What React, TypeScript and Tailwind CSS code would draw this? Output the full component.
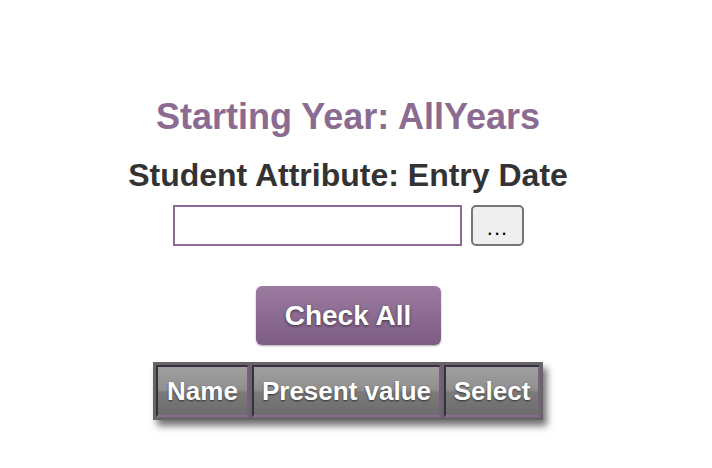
import React from "react";

export default function App() {
  const cell =
    "px-[8px] h-[52px] text-white font-bold text-[26px] border-2 border-t-[#3a2f3d] border-l-[#3a2f3d] border-r-[#7a5f80] border-b-[#8c6b92] bg-[linear-gradient(to_bottom,#a0a0a0_0%,#8f8f8f_48%,#7b7b7b_52%,#6c6c6c_100%)] [text-shadow:0_1px_2px_rgba(0,0,0,0.6)] whitespace-nowrap";
  return (
    <div className="w-[712px] h-[468px] bg-white">
      <div
        className="w-[696px] flex flex-col items-center"
        style={{ fontFamily: '"Liberation Sans", Arial, sans-serif' }}
      >
        <div className="mt-[95px] text-[36px] font-bold text-[#8b6b91] leading-[44px]">
          Starting Year: AllYears
        </div>
        <div className="mt-[18px] text-[32px] font-bold text-[#333] leading-[36px]">
          Student Attribute: Entry Date
        </div>
        <div className="mt-[12px] flex items-center gap-[9px]">
          <input
            type="text"
            className="w-[289px] h-[41px] border-2 border-[#8b6b91] outline-none bg-white"
          />
          <button className="w-[53px] h-[41px] rounded-[5px] border-2 border-[#767676] bg-[#efefef] text-[22px] tracking-[1px] text-black leading-none pt-[4px] pl-[1px]">
            ...
          </button>
        </div>
        <button className="mt-[40px] w-[185px] h-[59px] rounded-[6px] bg-[linear-gradient(to_bottom,#9b7b9f,#7c5c82)] text-white font-bold text-[28px] [text-shadow:0_1px_3px_rgba(0,0,0,0.55)] shadow-[0_1px_2px_rgba(0,0,0,0.35)]">
          Check All
        </button>
        <div className="mt-[17px] bg-[#666] p-[3px] flex gap-[3px] shadow-[4px_6px_7px_rgba(0,0,0,0.55)]">
          <div className={cell + " w-[93px] flex items-center justify-center"}>Name</div>
          <div className={cell + " w-[189px] flex items-center justify-center"}>Present value</div>
          <div className={cell + " w-[96px] flex items-center justify-center"}>Select</div>
        </div>
      </div>
    </div>
  );
}
